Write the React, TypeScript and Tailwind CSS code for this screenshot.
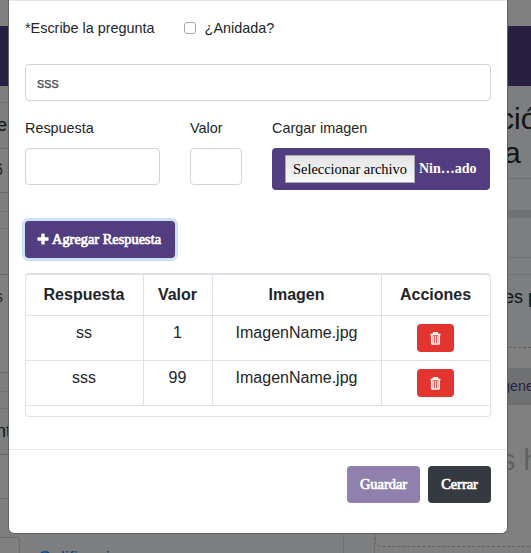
import type { ReactNode } from "react";

function TrashIcon() {
  return (
    <svg viewBox="0 0 11 13" className="h-[13px] w-[11px]" fill="none" stroke="white">
      <path d="M0.5 2.6h10M3.4 2.3V1.4q0-.7.7-.7h2.8q.7 0 .7.7v.9" strokeWidth="1.5" />
      <path d="M1.8 3v7.9q0 1.1 1.1 1.1h5.2q1.1 0 1.1-1.1V3" strokeWidth="1.7" />
      <path d="M3.7 4v7M5.5 4v7M7.3 4v7" strokeWidth="1" />
    </svg>
  );
}

function PlusIcon() {
  return (
    <svg viewBox="0 0 12 12" className="mr-[3px] h-3 w-3 -translate-y-px" fill="white" stroke="none">
      <path d="M4.9 0.5h2.2q.6 0 .6.6v3.2h3.3q.6 0 .6.6v2.2q0 .6-.6.6H7.7v3.2q0 .6-.6.6H4.9q-.6 0-.6-.6V7.7H1q-.6 0-.6-.6V4.9q0-.6.6-.6h3.3V1.1q0-.6.6-.6z" />
    </svg>
  );
}

function Cell({ children, head = false }: { children: ReactNode; head?: boolean }) {
  return (
    <div
      className={
        head
          ? "border-r border-[#dee2e6] pt-[8px] pr-px text-center font-bold last:border-r-0"
          : "border-r border-[#dee2e6] pt-[5px] pr-px text-center last:border-r-0"
      }
    >
      {children}
    </div>
  );
}

function AnswerRow({ name, value }: { name: string; value: string }) {
  return (
    <div className="grid h-[45px] grid-cols-[118px_69px_169px_1fr] border-b border-[#dee2e6]">
      <Cell>{name}</Cell>
      <Cell>{value}</Cell>
      <Cell>ImagenName.jpg</Cell>
      <Cell>
        <button className="mt-[3px] mr-px inline-flex h-7 w-[37px] items-center justify-center rounded bg-[#e3342f]">
          <TrashIcon />
        </button>
      </Cell>
    </div>
  );
}

function Backdrop() {
  return (
    <div className="flex h-full flex-col bg-[#7d7e7f] text-[#111314]">
      <div className="h-[26px] shrink-0 bg-[#808080]" />
      <div className="h-[60px] shrink-0 bg-[#291f40]" />
      <div className="flex min-h-0 flex-1 justify-between">
        <div className="flex w-[344px] shrink-0 flex-col border-r border-[#707172]">
          <div className="h-[17px] shrink-0 border-b border-[#6f7173]" />
          <div className="h-[46px] shrink-0 border-b border-[#66696c] pt-[10px] text-[18px] leading-6">
            <span className="-ml-[3px]">er</span>
          </div>
          <div className="h-11 shrink-0 border-b border-[#66696c] bg-[#808080] pt-[9px] text-[16px] leading-6 text-[#25282b]">
            <span className="-ml-[6px]">6</span>
          </div>
          <div className="h-[19px] shrink-0 border-b border-[#6f7173]" />
          <div className="h-[17px] shrink-0 border-b border-[#6f7173]" />
          <div className="h-[46px] shrink-0 border-b border-[#66696c]" />
          <div className="h-[98px] shrink-0 border-b border-[#66696c] bg-[#808080] pt-[10px] text-[16px] leading-6 text-[#25282b]">
            <span className="-ml-[5px]">s</span>
          </div>
          <div className="h-[19px] shrink-0 border-b border-[#6f7173]" />
          <div className="h-[17px] shrink-0 border-b border-[#6f7173]" />
          <div className="h-[46px] shrink-0 border-b border-[#66696c] pt-[10px] text-[18px] leading-6">
            <span className="-ml-[4px]">nt</span>
          </div>
          <div className="h-11 shrink-0 border-b border-[#66696c] bg-[#808080]" />
          <div className="mt-[38px] flex h-10 shrink-0">
            <div className="w-5 rounded-tr border-t border-r border-[#6b6d6f] bg-[#808080]" />
            <div className="ml-[18px] pt-[9px] text-[18px] leading-6 text-[#104a78]">Calificaciones</div>
          </div>
        </div>
        <div className="flex w-[157px] shrink-0 flex-col overflow-hidden border-l border-[#707172] whitespace-nowrap">
          <div className="h-[93px] shrink-0 border-b border-[#6d6f70] pt-4 pl-[129px] text-[30px] leading-[34px]">
            <div className="-ml-[5px]">ció</div>
            <div>a</div>
          </div>
          <div className="h-[31px] shrink-0" />
          <div className="h-2 shrink-0 bg-[#6f7071]" />
          <div className="h-10 shrink-0 border-b border-[#707172]" />
          <div className="h-[17px] shrink-0 border-b border-[#707172]" />
          <div className="h-[73px] shrink-0 border-b border-dashed border-[#606162] pt-[10px] pl-[129px] text-[18px] leading-6">
            es para
          </div>
          <div className="h-5 shrink-0 bg-[#808080]" />
          <div className="h-[37px] shrink-0 bg-[#6f7072] pt-[8px] pl-[127px] text-[14.4px] leading-5 text-[#291f40]">
            genes
          </div>
          <div className="h-[142px] shrink-0 rounded-bl-md border-b border-l border-dashed border-[#606162] bg-[#808080] pt-[37px] pl-[125px] text-[29px] leading-9 text-[#5f6061]">
            s ha
          </div>
        </div>
      </div>
    </div>
  );
}

function Modal() {
  return (
    <div className="absolute top-0 left-2 flex h-[534px] w-[500px] flex-col rounded-b-md border border-t-0 border-[#616263] bg-white text-[14.4px] text-[#212529]">
      <div className="h-[449px] border-t border-[#dfe4e8] px-4">
        <div className="flex h-[63px] pt-[16px] leading-[22px]">
          <span>*Escribe la pregunta</span>
          <input
            type="checkbox"
            className="mt-[5px] ml-[29px] h-3 w-3 appearance-none rounded-[3px] border border-[#a6a6a6] bg-white"
          />
          <span className="ml-[9px]">¿Anidada?</span>
        </div>
        <input
          defaultValue="sss"
          className="block h-[37px] w-full rounded border border-[#ced4da] px-[11px] text-[#495057] [-webkit-text-stroke:0.25px]"
        />
        <div className="flex h-[120px] pt-4 leading-[22px]">
          <div className="w-[135px]">
            <label>Respuesta</label>
            <input className="mt-[9px] block h-[37px] w-full rounded border border-[#ced4da]" />
          </div>
          <div className="ml-[30px] w-[52px]">
            <label>Valor</label>
            <input className="mt-[9px] block h-[37px] w-full rounded border border-[#ced4da]" />
          </div>
          <div className="ml-[30px] w-[218px]">
            <label>Cargar imagen</label>
            <div className="mt-[9px] flex h-[42px] items-center rounded bg-[#523d80] pl-[13px] font-['Liberation_Serif',serif] text-[14.4px] text-white">
              <button className="h-7 w-[130px] border border-[#a9a9a9] bg-linear-to-b from-[#e4e4e4] to-[#f8f8f8] whitespace-nowrap text-black">
                Seleccionar archivo
              </button>
              <span className="ml-1 text-[14px] font-bold">Nin…ado</span>
            </div>
          </div>
        </div>
        <button className="flex h-[37px] w-[150px] items-center rounded bg-[#523d80] pl-3 font-['Liberation_Serif',serif] whitespace-nowrap text-white shadow-[0_0_0_3px_#c8e1f5] [-webkit-text-stroke:0.7px]">
          <PlusIcon />
          Agregar Respuesta
        </button>
        <div className="mt-[15px] h-[144px] rounded border border-t-2 border-[#dee2e6] text-[16px] leading-6">
          <div className="grid h-[41px] grid-cols-[118px_69px_169px_1fr] border-b border-[#dee2e6]">
            <Cell head>Respuesta</Cell>
            <Cell head>Valor</Cell>
            <Cell head>Imagen</Cell>
            <Cell head>Acciones</Cell>
          </div>
          <AnswerRow name="ss" value="1" />
          <AnswerRow name="sss" value="99" />
        </div>
      </div>
      <div className="flex flex-1 justify-end gap-2 border-t border-[#e9ecef] px-4 pt-4 font-['Liberation_Serif',serif] text-white [-webkit-text-stroke:0.7px]">
        <button className="h-[37px] w-[73px] rounded bg-[#8f80ad]">Guardar</button>
        <button className="h-[37px] w-[63px] rounded bg-[#343a40]">Cerrar</button>
      </div>
    </div>
  );
}

export default function App() {
  return (
    <div className="relative h-[553px] w-[531px] overflow-hidden font-['Liberation_Sans',Arial,sans-serif]">
      <Backdrop />
      <Modal />
    </div>
  );
}
